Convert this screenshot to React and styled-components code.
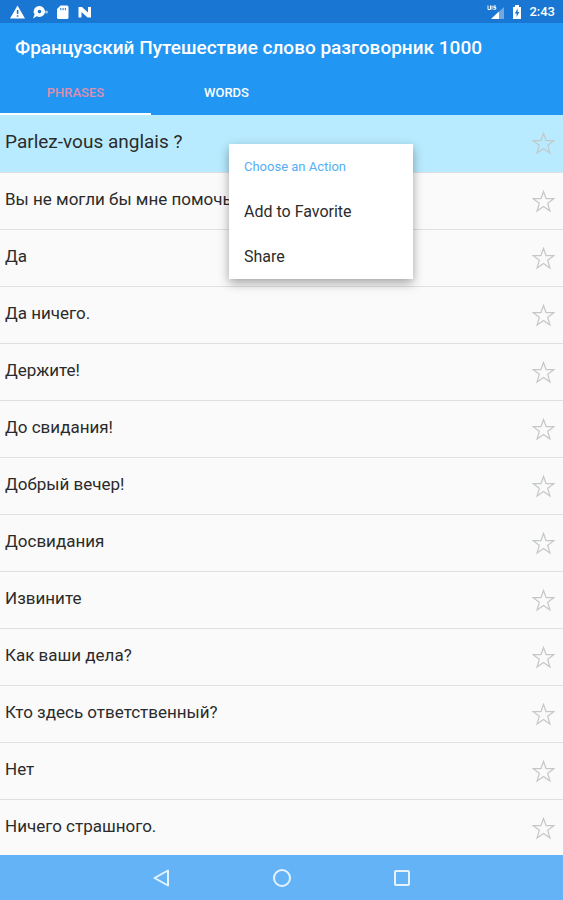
import React, { useState } from 'react'
import styled, { createGlobalStyle } from 'styled-components'

const phrases = [
  'Parlez-vous anglais ?',
  'Вы не могли бы мне помочь?',
  'Да',
  'Да ничего.',
  'Держите!',
  'До свидания!',
  'Добрый вечер!',
  'Досвидания',
  'Извините',
  'Как ваши дела?',
  'Кто здесь ответственный?',
  'Нет',
  'Ничего страшного.',
]

function StatusIcons() {
  return (
    <svg width='84' height='16' viewBox='0 0 84 16' fill='#fff' aria-hidden='true'>
      <path fillRule='evenodd' d='M7.5 1.5 15 14.5H0ZM6.8 6v4h1.6V6Zm0 5.2v1.6h1.6v-1.6Z' />
      <path fillRule='evenodd' d='M29.5 2a5.500 5.500 0 1 1-2.700 10.300L23 14.500l1.600-3.900A5.500 5.500 0 0 1 29.500 2Zm0 3.800a1.800 1.800 0 1 0 0 3.600 1.800 1.800 0 0 0 0-3.600Z' />
      <circle cx='36.500' cy='8' r='1.500' opacity='.6' />
      <path fillRule='evenodd' d='M50.500 1.500H57A1.500 1.500 0 0 1 58.500 3v10.500A1.500 1.500 0 0 1 57 15h-8.500a1.500 1.500 0 0 1-1.500-1.500V5ZM50.300 4v2.300h1V4Zm2.300 0v2.300h1V4Zm2.300 0v2.300h1V4Z' />
      <path d='M68.500 3h3.500l6 5.500V3h3v10.500h-3.500l-6-5.500v5.500h-3Z' />
    </svg>
  )
}

function SignalIcon() {
  return (
    <svg width='18' height='16' viewBox='0 0 18 16' aria-hidden='true'>
      <path d='M17 3v12H4Z' fill='#6fa9e0' />
      <path d='M12 7.500V15H4Z' fill='#fff' />
      <path d='M1 1.500v4h2.500v-4M5 1.500v4M9 2H6.800v1.500h2v1.700H6.300' fill='none' stroke='#fff' />
    </svg>
  )
}

function BatteryIcon() {
  return (
    <svg width='10' height='16' viewBox='0 0 10 16' aria-hidden='true'>
      <path d='M3 1h4v2h2v12H1V3h2Z' fill='#fff' />
      <path d='M5.700 4.500 2.800 9.500h1.800v3.500L7.300 8H5.700Z' fill='#1976d2' />
    </svg>
  )
}

function Star() {
  return (
    <svg width='23' height='23' viewBox='0 0 24 24' fill='none' stroke='#c4c8c9' strokeWidth='1.300' aria-hidden='true'>
      <path d='M12 1.500 14.700 9h8l-6.300 4.900 2.300 8L12 17.300l-6.700 4.600 2.300-8L1.300 9h8Z' />
    </svg>
  )
}

function App() {
  const [tab, setTab] = useState('Phrases')

  return (
    <Screen>
      <GlobalStyle />
      <StatusBar>
        <StatusIcons />
        <StatusRight>
          <SignalIcon />
          <BatteryIcon />
          <span>2:43</span>
        </StatusRight>
      </StatusBar>
      <Header>
        <Title>Французский Путешествие слово разговорник 1000</Title>
        <Tabs role='tablist'>
          {['Phrases', 'Words'].map((name) => (
            <Tab key={name} role='tab' aria-selected={tab === name} $active={tab === name} onClick={() => setTab(name)}>
              {name}
            </Tab>
          ))}
        </Tabs>
      </Header>
      <Content>
        <List>
          {phrases.map((text, i) => (
            <Row key={text} $selected={i === 0}>
              <span>{text}</span>
              <StarButton aria-label={'Favorite: ' + text}>
                <Star />
              </StarButton>
            </Row>
          ))}
        </List>
        <Menu>
          <MenuTitle>Choose an Action</MenuTitle>
          <MenuItem>Add to Favorite</MenuItem>
          <MenuItem>Share</MenuItem>
        </Menu>
      </Content>
      <NavBar>
        <NavButton aria-label='Back'>
          <svg width='20' height='20' viewBox='0 0 20 20'><path d='M16 2.500v15L2.500 10Z' /></svg>
        </NavButton>
        <NavButton aria-label='Home'>
          <svg width='20' height='20' viewBox='0 0 20 20'><circle cx='10' cy='10' r='8' /></svg>
        </NavButton>
        <NavButton aria-label='Recent apps'>
          <svg width='20' height='20' viewBox='0 0 20 20'><rect x='3' y='3' width='14' height='14' rx='1' /></svg>
        </NavButton>
      </NavBar>
    </Screen>
  )
}

const GlobalStyle = createGlobalStyle`
  * {
    box-sizing: border-box;
  }
  body {
    margin: 0;
    font-family: Roboto, sans-serif;
    color: #2b2b2b;
    background: #fafafa;
  }
  button {
    padding: 0;
    border: none;
    background: none;
    font-family: inherit;
    color: inherit;
    cursor: pointer;
  }
  svg {
    display: block;
  }
`

const Screen = styled.div`
  display: flex;
  flex-direction: column;
  height: 100vh;
`

const StatusBar = styled.div`
  display: flex;
  justify-content: space-between;
  align-items: center;
  height: 23px;
  padding: 0 8px 0 10px;
  background: #1976d2;
`

const StatusRight = styled.div`
  display: flex;
  align-items: center;
  gap: 7px;
  color: #fff;
  font-size: 13px;
  font-weight: 500;
`

const Header = styled.header`
  background: #2196f3;
  color: #fff;
`

const Title = styled.h1`
  margin: 0;
  padding: 0 15px;
  font-size: 19px;
  line-height: 49px;
  font-weight: 500;
  white-space: nowrap;
`

const Tabs = styled.div`
  display: flex;
`

const Tab = styled.button`
  width: 151px;
  height: 43px;
  border-bottom: 2px solid ${(p) => (p.$active ? '#fff' : 'transparent')};
  color: ${(p) => (p.$active ? '#dc8fae' : '#fff')};
  font-size: 13px;
  font-weight: 500;
  text-transform: uppercase;
`

const Content = styled.main`
  position: relative;
  flex: 1;
  min-height: 0;
  overflow: hidden;
`

const List = styled.ul`
  margin: 0;
  padding: 0;
  list-style: none;
`

const Row = styled.li`
  display: flex;
  align-items: center;
  justify-content: space-between;
  height: ${(p) => (p.$selected ? 58 : 57)}px;
  padding: 0 8px 4px 5px;
  border-bottom: 1px solid #dfdfdf;
  background: ${(p) => (p.$selected ? '#b8ebff' : '#fafafa')};
  font-size: ${(p) => (p.$selected ? 19 : 17)}px;
`

const StarButton = styled.button`
  margin-top: 4px;
`

const Menu = styled.div`
  position: absolute;
  top: 29px;
  left: 229px;
  display: flex;
  flex-direction: column;
  width: 184px;
  background: #fff;
  box-shadow: 0 4px 10px rgba(0, 0, 0, 0.35);
`

const MenuTitle = styled.div`
  padding: 0 15px;
  color: #55aef5;
  font-size: 13px;
  line-height: 45px;
`

const MenuItem = styled.button`
  padding: 0 15px;
  font-size: 16px;
  line-height: 45px;
  text-align: left;
`

const NavBar = styled.nav`
  display: flex;
  justify-content: center;
  gap: 100px;
  height: 45px;
  background: #64b3f6;
`

const NavButton = styled.button`
  svg {
    fill: none;
    stroke: #e6f3fe;
    stroke-width: 2;
    stroke-linejoin: round;
  }
`

export default App
